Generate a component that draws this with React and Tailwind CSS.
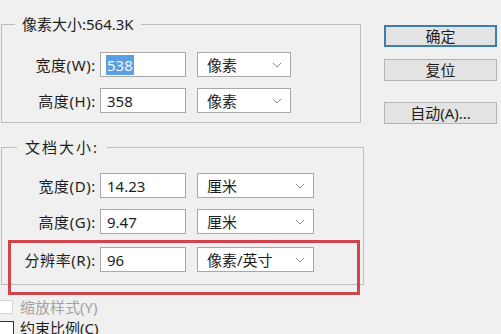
import React from "react";

const FONT = {
  fontFamily: '"Noto Sans", "Noto Sans CJK SC", sans-serif',
};

function Chevron() {
  return (
    <svg width="10" height="6" viewBox="0 0 10 6" className="shrink-0">
      <path d="M1 1 L5 5 L9 1" fill="none" stroke="#8c8c8c" strokeWidth="1" />
    </svg>
  );
}

function Row({ label, value, unit, selW, selected, mt }) {
  return (
    <div className={`flex items-center h-[25px] ${mt}`}>
      <div className="w-[95px] text-right pr-[1px] text-[15px] leading-[20px] tracking-[0.6px] text-[#1e1e1e] whitespace-nowrap">
        {label}
      </div>
      <div className="ml-[3px] w-[86px] h-[25px] bg-white border border-[#a8a8a8] flex items-center pl-[5px] text-[15px] text-[#1e1e1e]">
        {selected ? (
          <span className="bg-[#5b9fe0] text-[#eef5ff] px-[1px] leading-[20px]">{value}</span>
        ) : (
          <span className="leading-[20px] pl-[1px]">{value}</span>
        )}
      </div>
      <div
        className={`ml-[11px] ${selW} h-[25px] bg-white border border-[#a8a8a8] flex items-center justify-between pl-[9px] pr-[8px] text-[15px] text-[#1e1e1e]`}
      >
        <span className="leading-[20px]">{unit}</span>
        <Chevron />
      </div>
    </div>
  );
}

function Btn({ children, primary, mt }) {
  return (
    <div
      className={`${mt} w-[113px] h-[22px] flex items-center justify-center text-[15px] leading-[20px] text-[#1e1e1e] bg-[#e3e3e3] ${
        primary ? "border-2 border-[#3d7db0]" : "border border-[#b4b4b4]"
      }`}
    >
      {children}
    </div>
  );
}

export default function App() {
  return (
    <div className="relative w-[501px] h-[334px] overflow-hidden bg-[#f0f0f0]" style={FONT}>
      <div className="flex">
        <div className="pl-[1px] pt-[14px] w-[370px]">
          <fieldset className="w-[360px] border border-[#bdbdbd] pb-[9px]">
            <legend className="ml-[13px] px-[7px] text-[15px] leading-[20px] text-[#1e1e1e]">
              像素大小:564.3K
            </legend>
            <Row label="宽度(W):" value="538" unit="像素" selW="w-[94px]" selected mt="mt-[18px]" />
            <Row label="高度(H):" value="358" unit="像素" selW="w-[94px]" mt="mt-[11px]" />
          </fieldset>
          <fieldset className="mt-[14px] w-[363px] border border-[#bdbdbd] pb-[12px]">
            <legend className="ml-[15px] px-[8px] text-[15px] leading-[20px] tracking-[2px] text-[#1e1e1e]">
              文档大小:
            </legend>
            <Row label="宽度(D):" value="14.23" unit="厘米" selW="w-[117px]" mt="mt-[16px]" />
            <Row label="高度(G):" value="9.47" unit="厘米" selW="w-[117px]" mt="mt-[11px]" />
            <Row label="分辨率(R):" value="96" unit="像素/英寸" selW="w-[117px]" mt="mt-[13px]" />
          </fieldset>
          <div className="mt-[14px] flex items-center h-[16px]">
            <div className="ml-[-2px] w-[14px] h-[14px] bg-white border border-[#d4d4d4]" />
            <span className="ml-[7px] text-[15px] leading-[20px] text-[#a3a3a3]">缩放样式(Y)</span>
          </div>
          <div className="mt-[5px] flex items-center h-[16px]">
            <div className="ml-[-2px] w-[15px] h-[14px] bg-white border border-[#333]" />
            <span className="ml-[6px] text-[15px] leading-[20px] text-[#1e1e1e]">约束比例(C)</span>
          </div>
        </div>
        <div className="pl-[14px] pt-[25px] flex flex-col">
          <Btn primary mt="">确定</Btn>
          <Btn mt="mt-[12px]">复位</Btn>
          <Btn mt="mt-[21px]">自动(A)...</Btn>
        </div>
      </div>
      <div className="absolute left-[8px] top-[240px] w-[352px] h-[55px] border-[3px] border-[#d0454c]" />
    </div>
  );
}
